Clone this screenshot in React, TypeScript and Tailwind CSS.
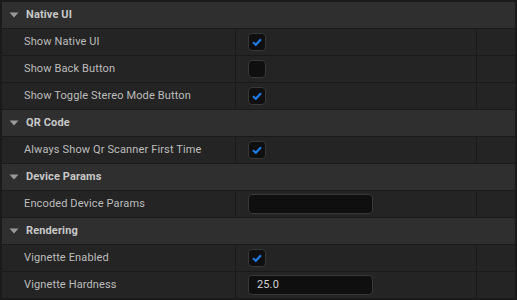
import React from "react";

type Row =
  | { kind: "header"; label: string }
  | { kind: "check"; label: string; checked: boolean }
  | { kind: "text"; label: string; value: string };

const rows: Row[] = [
  { kind: "header", label: "Native UI" },
  { kind: "check", label: "Show Native UI", checked: true },
  { kind: "check", label: "Show Back Button", checked: false },
  { kind: "check", label: "Show Toggle Stereo Mode Button", checked: true },
  { kind: "header", label: "QR Code" },
  { kind: "check", label: "Always Show Qr Scanner First Time", checked: true },
  { kind: "header", label: "Device Params" },
  { kind: "text", label: "Encoded Device Params", value: "" },
  { kind: "header", label: "Rendering" },
  { kind: "check", label: "Vignette Enabled", checked: true },
  { kind: "text", label: "Vignette Hardness", value: "25.0" },
];

function Checkbox({ checked }: { checked: boolean }) {
  return (
    <div className="w-[18px] h-[18px] rounded-[4px] border border-[#383838] bg-[#0f0f0f] flex items-center justify-center">
      {checked && (
        <svg width="10" height="8" viewBox="0 0 10 8">
          <path d="M1 4.2 L3.8 6.8 L9 1.2" fill="none" stroke="#1f7ae0" strokeWidth="2.2" strokeLinejoin="miter" />
        </svg>
      )}
    </div>
  );
}

export default function App() {
  return (
    <div
      className="w-[517px] h-[300px] bg-[#1a1a1a] p-[2px] flex flex-col gap-px text-[11px] tracking-[0.13px]"
      style={{ fontFamily: "Roboto, 'Noto Sans', sans-serif" }}
    >
      {rows.map((r, i) =>
        r.kind === "header" ? (
          <div key={i} className="h-[26px] shrink-0 bg-[#2f2f2f] flex items-center pl-[7px]">
            <svg width="10" height="6" viewBox="0 0 10 6" className="mr-[7px]">
              <path d="M0.5 0.5 L9.5 0.5 L5 5.5 Z" fill="#9a9a9a" />
            </svg>
            <span className="font-bold text-[#c8c8c8]">{r.label}</span>
          </div>
        ) : (
          <div key={i} className="h-[26px] shrink-0 flex gap-px">
            <div className="w-[233px] bg-[#242424] flex items-center pl-[22px] text-[#bdbdbd]">
              {r.label}
            </div>
            <div className="w-[240px] bg-[#242424] flex items-center pl-[12px]">
              {r.kind === "check" ? (
                <Checkbox checked={r.checked} />
              ) : (
                <div className="w-[125px] h-[20px] rounded-[4px] border border-[#383838] bg-[#0f0f0f] flex items-center pl-[8px] text-[#d4d4d4]">
                  {r.value}
                </div>
              )}
            </div>
            <div className="flex-1 bg-[#242424]" />
          </div>
        )
      )}
    </div>
  );
}
